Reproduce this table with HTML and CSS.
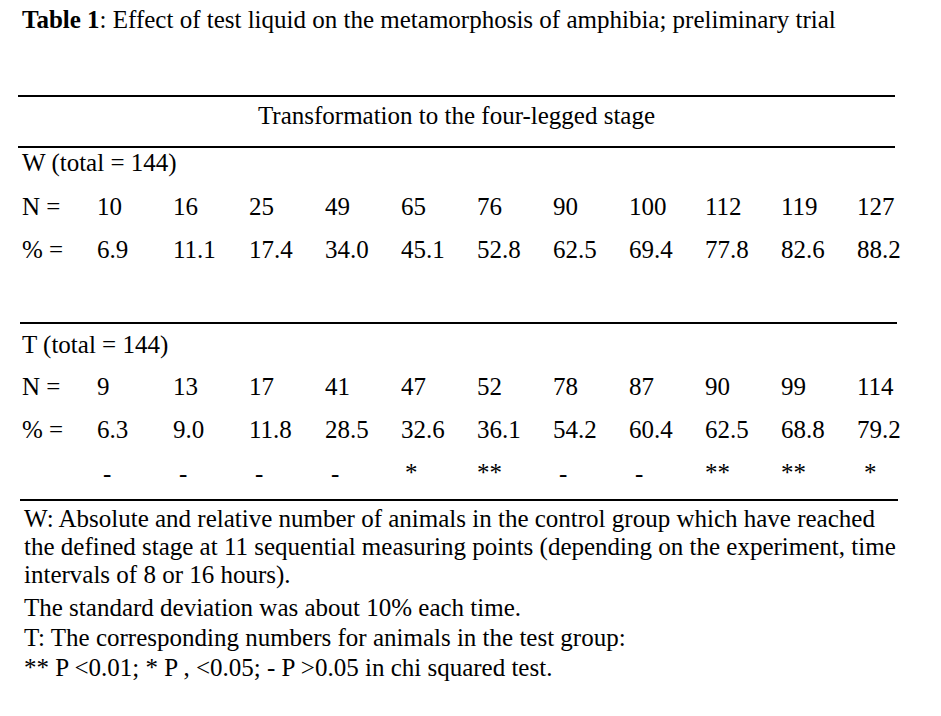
FILE: index.html
```html
<!DOCTYPE html>
<html lang="en">
<head>
<meta charset="utf-8">
<title>Table 1</title>
<link rel="stylesheet" href="styles.css">
</head>
<body>
<div class="page">
  <p class="title"><b>Table 1</b>: Effect of test liquid on the metamorphosis of amphibia; preliminary trial</p>
  <div class="rule r1"></div>
  <p class="header">Transformation to the four-legged stage</p>
  <div class="rule r2"></div>
  <section class="group wgroup">
    <p class="glabel">W (total = 144)</p>
    <div class="row first">
      <span>N =</span><span>10</span><span>16</span><span>25</span><span>49</span><span>65</span><span>76</span><span>90</span><span>100</span><span>112</span><span>119</span><span>127</span>
    </div>
    <div class="row">
      <span>% =</span><span>6.9</span><span>11.1</span><span>17.4</span><span>34.0</span><span>45.1</span><span>52.8</span><span>62.5</span><span>69.4</span><span>77.8</span><span>82.6</span><span>88.2</span>
    </div>
  </section>
  <div class="rule r3"></div>
  <section class="group tgroup">
    <p class="glabel">T (total = 144)</p>
    <div class="row first">
      <span>N =</span><span>9</span><span>13</span><span>17</span><span>41</span><span>47</span><span>52</span><span>78</span><span>87</span><span>90</span><span>99</span><span>114</span>
    </div>
    <div class="row">
      <span>% =</span><span>6.3</span><span>9.0</span><span>11.8</span><span>28.5</span><span>32.6</span><span>36.1</span><span>54.2</span><span>60.4</span><span>62.5</span><span>68.8</span><span>79.2</span>
    </div>
    <div class="row sig">
      <span></span><span class="dash">-</span><span class="dash">-</span><span class="dash">-</span><span class="dash">-</span><span class="star">*</span><span>**</span><span class="dash">-</span><span class="dash">-</span><span>**</span><span>**</span><span class="star end">*</span>
    </div>
  </section>
  <div class="rule r4"></div>
  <div class="notes">
    <p class="n1">W: Absolute and relative number of animals in the control group which have reached<br>the defined stage at 11 sequential measuring points (depending on the experiment, time<br>intervals of 8 or 16 hours).</p>
    <p class="n2">The standard deviation was about 10% each time.</p>
    <p class="n3">T: The corresponding numbers for animals in the test group:</p>
    <p class="n3">** P &lt;0.01; * P , &lt;0.05; - P &gt;0.05 in chi squared test.</p>
  </div>
</div>
</body>
</html>
```

FILE: styles.css
```css
html, body {
  margin: 0;
  padding: 0;
  background: #ffffff;
}

body {
  font-family: "Liberation Serif", "Times New Roman", serif;
  color: #000000;
  font-size: 25px;
}

.page {
  width: 941px;
  height: 716px;
  overflow: hidden;
}

p {
  margin: 0;
}

.title {
  line-height: 40px;
  padding-left: 22px;
  white-space: nowrap;
}

.title b {
  font-weight: bold;
}

.rule {
  height: 2px;
  background: #000000;
  margin-left: 18px;
  width: 877px;
}

.r1 {
  margin-top: 55px;
}

.header {
  line-height: 38px;
  text-align: center;
  width: 877px;
  margin-left: 18px;
  margin-bottom: 11px;
}

.group {
  padding-left: 22px;
}

.wgroup {
  padding-top: 2px;
}

.glabel {
  line-height: 26px;
}

.row {
  display: grid;
  grid-template-columns: 75px repeat(11, 76px);
  line-height: 43px;
  white-space: nowrap;
}

.wgroup .row.first {
  margin-top: 9px;
}

.tgroup .row.first {
  margin-top: 7px;
}

.r3 {
  margin-top: 51px;
  width: 877px;
  margin-left: 20px;
}

.tgroup {
  padding-top: 8px;
}

.row.sig {
  height: 43px;
}

.dash {
  padding-left: 6px;
  padding-top: 3px;
  line-height: 40px;
}

.star {
  padding-left: 4px;
}

.star.end {
  padding-left: 7px;
}

.r4 {
  margin-top: 5px;
  margin-left: 20px;
  width: 878px;
}

.notes {
  padding-left: 24px;
  white-space: nowrap;
}

.n1 {
  line-height: 28px;
  margin-top: 4px;
}

.n2 {
  line-height: 30px;
  margin-top: 4px;
}

.n3 {
  line-height: 30px;
}
```
